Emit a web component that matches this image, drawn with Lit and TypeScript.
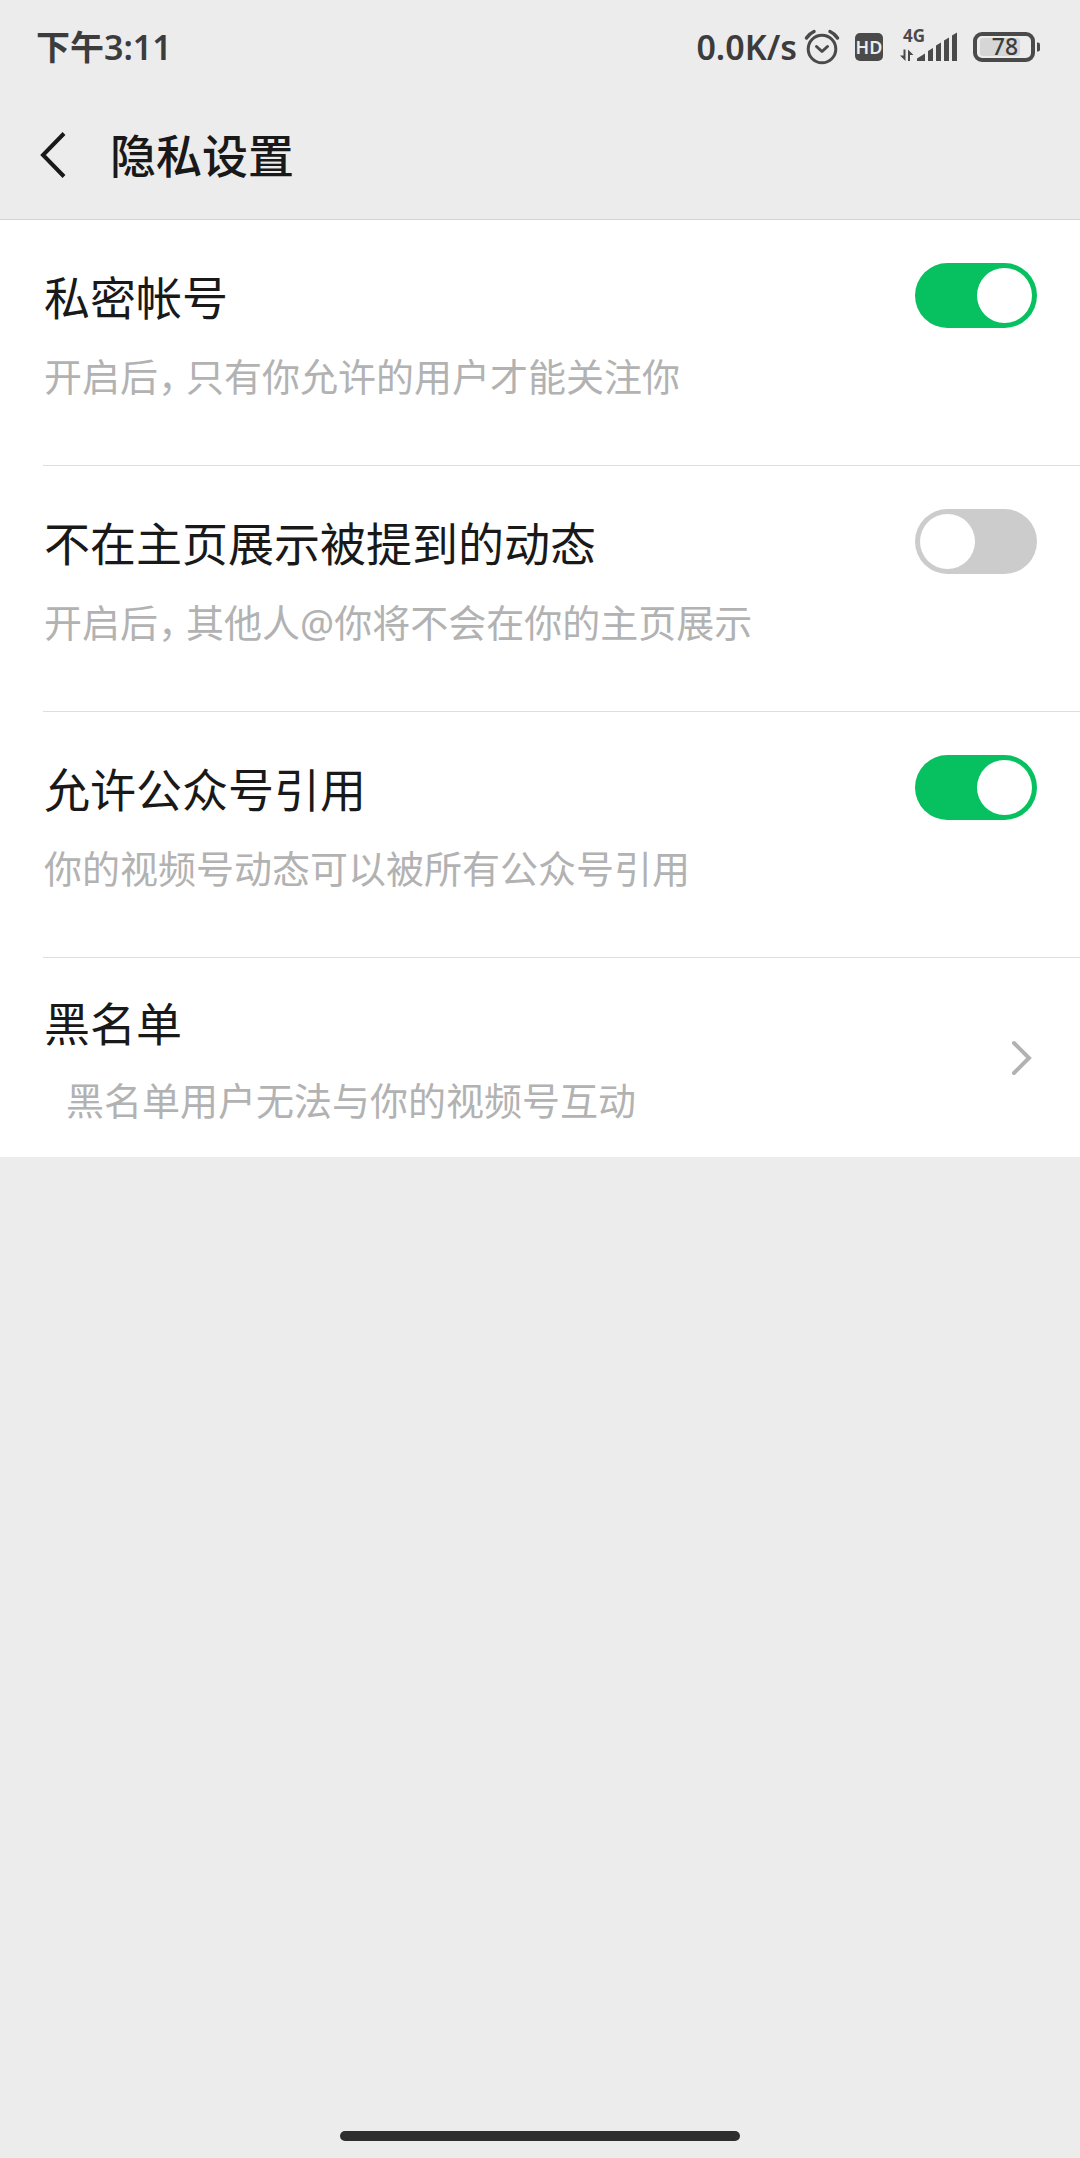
import { LitElement, html, css, svg } from "lit";
import { customElement, property, state } from "lit/decorators.js";

@customElement("status-bar")
class StatusBar extends LitElement {
  static styles = css`
    :host {
      display: block;
    }
    .bar {
      display: flex;
      align-items: center;
      justify-content: space-between;
      height: 94px;
      padding: 0 38px 0 36px;
      color: #3c3c3c;
      font-weight: 600;
    }
    .time {
      font-size: 34px;
      line-height: 40px;
    }
    .tray {
      display: flex;
      align-items: center;
    }
    .speed {
      font-size: 34px;
      line-height: 40px;
      margin-right: 5px;
    }
    .icons {
      display: block;
      width: 240px;
      height: 46px;
    }
  `;

  render() {
    return html`
      <div class="bar">
        <span class="time">下午3:11</span>
        <div class="tray">
          <span class="speed">0.0K/s</span>
          ${this.icons()}
        </div>
      </div>
    `;
  }

  private icons() {
    return svg`
      <svg class="icons" viewBox="0 0 240 46" fill="none" aria-hidden="true">
        <g stroke="#4a4a4a" stroke-width="3" stroke-linecap="round" stroke-linejoin="round">
          <circle cx="20" cy="25" r="13.8" />
          <path d="M14.5 22.5 L20 27.5 L25.5 22.5" />
          <path d="M4.5 14 Q7.5 9.5 12 7.5 M28 7.5 Q32.5 9.5 35.5 14" stroke-width="3.5" />
        </g>
        <rect x="53" y="9" width="28" height="28" rx="5" fill="#4a4a4a" />
        <text x="67" y="30" text-anchor="middle" font-size="18" font-weight="600" fill="#ececec"
          font-family="Noto Sans, sans-serif">HD</text>
        <text x="101" y="18" font-size="17" font-weight="700" fill="#4a4a4a"
          font-family="Noto Sans, sans-serif">4G</text>
        <g fill="#4a4a4a">
          <path d="M101.500 25.5 H103.5 V37 L98 31.5 H101.5 Z" />
          <path d="M106 37 V25.500 L111.5 31 H108 V37 Z" />
          <path d="M115 37 V34.5 L123 29.5 V37 Z" />
          <path d="M126 37 V27 L131 24 V37 Z" />
          <path d="M134 37 V21.5 L139 18.5 V37 Z" />
          <path d="M142 37 V16.5 L147 13.5 V37 Z" />
          <path d="M150 37 V11.5 L155 8.5 V37 Z" />
        </g>
        <rect x="178" y="14" width="40" height="18" rx="3" fill="#d6d6d6" />
        <rect x="173" y="10" width="58" height="26" rx="7" stroke="#4a4a4a" stroke-width="4" />
        <path d="M235 18.5 h1 q2 0 2 2 v5 q0 2 -2 2 h-1 z" fill="#4a4a4a" />
        <text x="203" y="31" text-anchor="middle" font-size="23" font-weight="500" fill="#3c3c3c"
          font-family="Noto Sans, sans-serif">78</text>
      </svg>
    `;
  }
}

@customElement("switch-row")
class SwitchRow extends LitElement {
  @property() heading = "";
  @property() detail = "";
  @property({ type: Boolean }) on = false;

  static styles = css`
    :host {
      display: block;
      padding-left: 43px;
    }
    .row {
      display: flex;
      align-items: flex-start;
      justify-content: space-between;
      gap: 24px;
      padding: 43px 43px 58px 1px;
      border-bottom: 1px solid #dedede;
    }
    .text {
      display: flex;
      flex-direction: column;
      gap: 16px;
      padding-top: 2px;
    }
    .heading {
      font-size: 46px;
      line-height: 64px;
      color: #191919;
    }
    .detail {
      font-size: 38px;
      line-height: 62px;
      color: #b2b2b2;
    }
    .comma {
      font-feature-settings: "halt";
      padding-right: 9px;
    }
    .switch {
      appearance: none;
      flex: none;
      display: flex;
      box-sizing: border-box;
      width: 122px;
      height: 65px;
      margin: 0;
      padding: 5px;
      border-radius: 33px;
      background: #cccccc;
      cursor: pointer;
    }
    .switch::before {
      content: "";
      width: 55px;
      height: 55px;
      border-radius: 50%;
      background: #ffffff;
    }
    .switch:checked {
      justify-content: flex-end;
      background: #07c160;
    }
  `;

  private toggle(e: Event) {
    this.on = (e.target as HTMLInputElement).checked;
  }

  render() {
    const [first, rest] = this.detail.split("，");
    return html`
      <div class="row">
        <div class="text">
          <label class="heading" for="control">${this.heading}</label>
          <span class="detail" id="detail"
            >${first}${rest ? html`<span class="comma">，</span>${rest}` : ""}</span
          >
        </div>
        <input
          class="switch"
          id="control"
          type="checkbox"
          role="switch"
          aria-describedby="detail"
          .checked=${this.on}
          @change=${this.toggle}
        />
      </div>
    `;
  }
}

@customElement("app-root")
class AppRoot extends LitElement {
  @state() private settings = [
    { heading: "私密帐号", detail: "开启后，只有你允许的用户才能关注你", on: true },
    { heading: "不在主页展示被提到的动态", detail: "开启后，其他人@你将不会在你的主页展示", on: false },
    { heading: "允许公众号引用", detail: "你的视频号动态可以被所有公众号引用", on: true },
  ];

  static styles = css`
    :host {
      display: flex;
      flex-direction: column;
      min-height: 100vh;
      background: #ececec;
      font-family: "Noto Sans", "Noto Sans CJK SC", sans-serif;
    }
    .top {
      display: flex;
      align-items: center;
      gap: 32px;
      height: 121px;
      padding: 0 32px 4px;
      border-bottom: 1px solid #d5d5d5;
    }
    .back {
      display: flex;
      padding: 0;
      border: 0;
      background: none;
      cursor: pointer;
    }
    .back svg {
      width: 46px;
      height: 56px;
    }
    .title {
      margin: 0;
      font-size: 46px;
      line-height: 64px;
      font-weight: 500;
      color: #191919;
    }
    .list {
      background: #ffffff;
    }
    .link {
      display: flex;
      align-items: center;
      justify-content: space-between;
      padding: 0 43px 0 44px;
      color: #191919;
      text-decoration: none;
    }
    .text {
      display: flex;
      flex-direction: column;
      gap: 14px;
      padding: 33px 0 26px;
    }
    .heading {
      font-size: 46px;
      line-height: 64px;
    }
    .detail {
      padding-left: 22px;
      font-size: 38px;
      line-height: 62px;
      color: #b2b2b2;
    }
    .chevron {
      flex: none;
      width: 32px;
      height: 44px;
    }
    .home {
      display: flex;
      justify-content: center;
      margin-top: auto;
      padding-bottom: 17px;
    }
    .pill {
      width: 37%;
      height: 10px;
      border-radius: 5px;
      background: #2e2e2e;
    }
  `;

  render() {
    return html`
      <status-bar></status-bar>
      <header class="top">
        <button class="back" type="button" aria-label="返回">
          <svg viewBox="0 0 46 56" fill="none" aria-hidden="true">
            <path d="M32 6.5 L11 28 L32 49.5" stroke="#191919" stroke-width="4" />
          </svg>
        </button>
        <h1 class="title">隐私设置</h1>
      </header>
      <main class="list">
        ${this.settings.map(
          (s) => html`<switch-row .heading=${s.heading} .detail=${s.detail} .on=${s.on}></switch-row>`
        )}
        <a class="link" href="#blacklist">
          <span class="text">
            <span class="heading">黑名单</span>
            <span class="detail">黑名单用户无法与你的视频号互动</span>
          </span>
          <svg class="chevron" viewBox="0 0 32 44" fill="none" aria-hidden="true">
            <path d="M9 7 L24 22 L9 37" stroke="#b2b2b2" stroke-width="4" stroke-linecap="round" />
          </svg>
        </a>
      </main>
      <div class="home"><div class="pill"></div></div>
    `;
  }
}
